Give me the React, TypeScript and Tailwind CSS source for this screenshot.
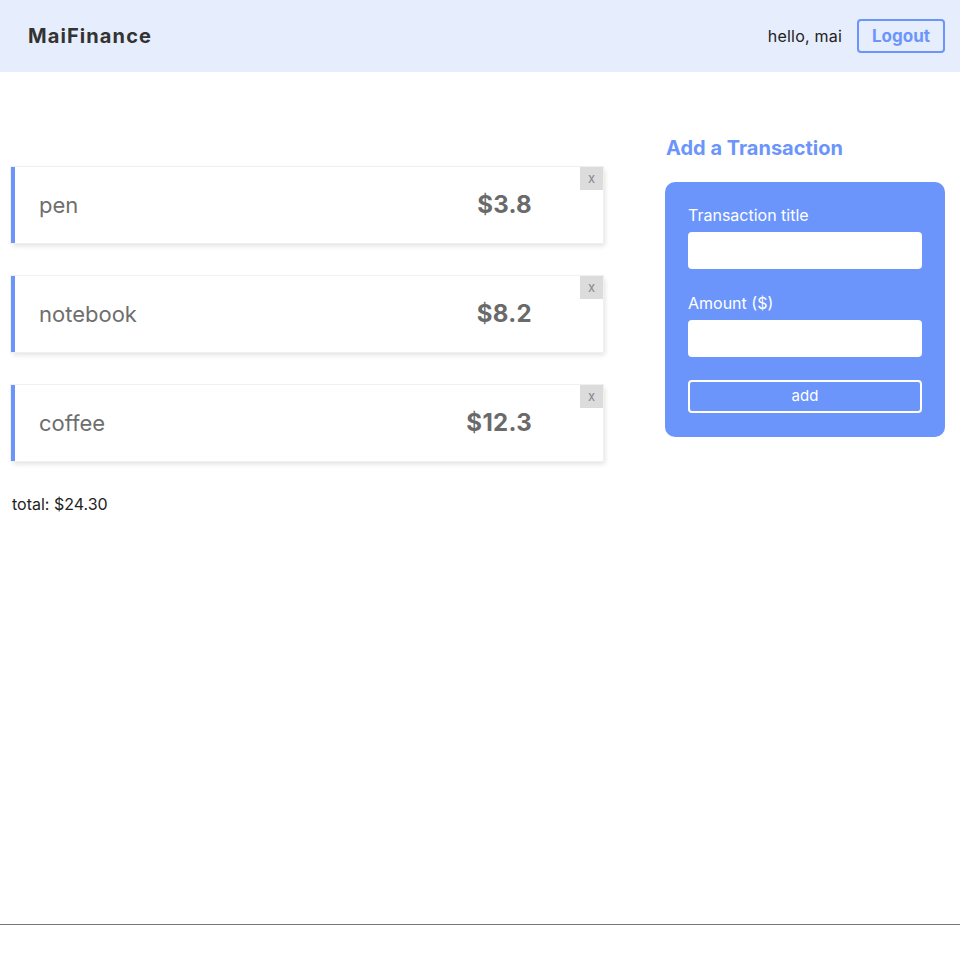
import { useState } from "react";

interface Tx {
  id: number;
  title: string;
  amount: number;
}

const INITIAL: Tx[] = [
  { id: 1, title: "pen", amount: 3.8 },
  { id: 2, title: "notebook", amount: 8.2 },
  { id: 3, title: "coffee", amount: 12.3 },
];

function TxCard({ tx, onRemove }: { tx: Tx; onRemove: (id: number) => void }) {
  return (
    <div className="relative flex items-center justify-between h-[76px] bg-white border-l-[4px] border-[#6b95fb] shadow-[2px_3px_5px_rgba(0,0,0,0.12)] outline outline-1 outline-[#f0f0f0]">
      <span className="pl-[24px] text-[22px] text-[#6e6e6e]">{tx.title}</span>
      <span className="pr-[71px] text-[24px] font-bold text-[#6a6a6a] tracking-[0.3px]">${tx.amount}</span>
      <button
        onClick={() => onRemove(tx.id)}
        className="absolute top-0 right-0 w-[23px] h-[23px] bg-[#dcdcdc] text-[#888] text-[13px] leading-none flex items-center justify-center"
      >
        x
      </button>
    </div>
  );
}

export default function App() {
  const [txs, setTxs] = useState<Tx[]>(INITIAL);
  const [title, setTitle] = useState("");
  const [amount, setAmount] = useState("");

  const total = txs.reduce((s, t) => s + t.amount, 0);

  function add() {
    const a = parseFloat(amount);
    if (!title || isNaN(a)) return;
    setTxs(t => [...t, { id: Date.now(), title, amount: a }]);
    setTitle("");
    setAmount("");
  }

  return (
    <div className="min-h-[960px] bg-white font-['Inter',sans-serif] text-[#222]">
      {/* Header */}
      <div className="h-[72px] bg-[#e6edfc] flex items-center justify-between pl-[28px] pr-[15px]">
        <span className="text-[20px] font-bold text-[#333] tracking-[1.1px]">MaiFinance</span>
        <div className="flex items-center gap-[15px]">
          <span className="text-[16px] text-[#222] tracking-[0.2px]">hello, mai</span>
          <button className="h-[34px] px-[13px] pt-[1px] border-2 border-[#6b95fb] rounded-[4px] text-[#6b95fb] text-[17px] font-bold bg-transparent">
            Logout
          </button>
        </div>
      </div>

      {/* Main */}
      <div className="flex px-[11px] h-[853px] border-b border-[#777]">
        <div className="w-[592px] pt-[95px]">
          <div className="flex flex-col gap-[33px]">
            {txs.map(tx => (
              <TxCard key={tx.id} tx={tx} onRemove={id => setTxs(t => t.filter(x => x.id !== id))} />
            ))}
          </div>
          <p className="mt-[31px] text-[16px] text-[#222] pl-[1px]">total: ${total.toFixed(2)}</p>
        </div>

        <div className="ml-[62px] w-[280px] pt-[61px]">
          <h2 className="text-[20px] font-bold text-[#6b95fb] pl-[1px]">Add a Transaction</h2>
          <div className="mt-[19px] bg-[#6b95fb] rounded-[10px] px-[23px] pt-[21px] pb-[24px]">
            <label className="block text-[16px] text-white mb-[5px]">Transaction title</label>
            <input
              value={title}
              onChange={e => setTitle(e.target.value)}
              className="block w-full h-[37px] rounded-[4px] bg-white px-2 outline-none"
            />
            <label className="block text-[16px] text-white mt-[22px] mb-[5px]">Amount ($)</label>
            <input
              value={amount}
              onChange={e => setAmount(e.target.value)}
              className="block w-full h-[37px] rounded-[4px] bg-white px-2 outline-none"
            />
            <button
              onClick={add}
              className="mt-[23px] w-full h-[33px] border-2 border-white rounded-[4px] text-white text-[15px]"
            >
              add
            </button>
          </div>
        </div>
      </div>
    </div>
  );
}
